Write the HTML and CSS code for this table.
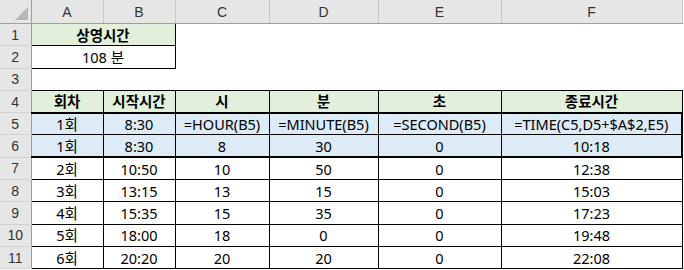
FILE: index.html
```html
<!DOCTYPE html>
<html lang="ko">
<head>
<meta charset="utf-8">
<title>상영시간</title>
<link rel="stylesheet" href="styles.css">
</head>
<body>
<table class="sheet">
  <colgroup>
    <col class="c-rh"><col class="c-a"><col class="c-b"><col class="c-c"><col class="c-d"><col class="c-e"><col class="c-f">
  </colgroup>
  <thead>
    <tr class="colhead">
      <th class="corner"><div class="corner-box"><svg width="13" height="13" viewBox="0 0 13 13"><polygon points="0,13 13,13 13,0" fill="#b7b7b7"/></svg></div></th>
      <th>A</th><th>B</th><th>C</th><th>D</th><th>E</th><th>F</th>
    </tr>
  </thead>
  <tbody>
    <tr><th class="rh">1</th><td colspan="2" class="box green bold">상영시간</td><td></td><td></td><td></td><td></td></tr>
    <tr><th class="rh">2</th><td colspan="2" class="box">108 분</td><td></td><td></td><td></td><td></td></tr>
    <tr><th class="rh">3</th><td></td><td></td><td></td><td></td><td></td><td></td></tr>
    <tr class="grid green bold"><th class="rh">4</th><td>회차</td><td>시작시간</td><td>시</td><td>분</td><td>초</td><td>종료시간</td></tr>
    <tr class="grid blue top-thick"><th class="rh">5</th><td>1회</td><td>8:30</td><td>=HOUR(B5)</td><td>=MINUTE(B5)</td><td>=SECOND(B5)</td><td class="right-thick">=TIME(C5,D5+$A$2,E5)</td></tr>
    <tr class="grid blue bottom-thick"><th class="rh">6</th><td>1회</td><td>8:30</td><td>8</td><td>30</td><td>0</td><td class="right-thick">10:18</td></tr>
    <tr class="grid"><th class="rh">7</th><td>2회</td><td>10:50</td><td>10</td><td>50</td><td>0</td><td>12:38</td></tr>
    <tr class="grid"><th class="rh">8</th><td>3회</td><td>13:15</td><td>13</td><td>15</td><td>0</td><td>15:03</td></tr>
    <tr class="grid"><th class="rh">9</th><td>4회</td><td>15:35</td><td>15</td><td>35</td><td>0</td><td>17:23</td></tr>
    <tr class="grid"><th class="rh">10</th><td>5회</td><td>18:00</td><td>18</td><td>0</td><td>0</td><td>19:48</td></tr>
    <tr class="grid"><th class="rh">11</th><td>6회</td><td>20:20</td><td>20</td><td>20</td><td>0</td><td>22:08</td></tr>
  </tbody>
</table>
</body>
</html>
```

FILE: styles.css
```css
html, body {
  margin: 0;
  padding: 0;
  background: #ffffff;
}

.sheet {
  border-collapse: collapse;
  table-layout: fixed;
  width: 682px;
  font-family: "Noto Sans", "Noto Sans CJK KR", sans-serif;
  font-size: 14.5px;
  color: #000;
}

.c-rh { width: 31px; }
.c-a { width: 72px; }
.c-b { width: 72px; }
.c-c { width: 94px; }
.c-d { width: 109px; }
.c-e { width: 123px; }
.c-f { width: 181px; }

.sheet td,
.sheet th {
  padding: 0;
  text-align: center;
  vertical-align: middle;
  line-height: 18px;
  white-space: nowrap;
  overflow: hidden;
}

.colhead th {
  height: 23px;
  background: #e6e6e6;
  color: #333;
  font-family: "Liberation Sans", Arial, sans-serif;
  font-weight: normal;
  font-size: 14px;
  border-right: 1px solid #c6c6c6;
  border-bottom: 1px solid #9e9e9e;
}

.colhead th.corner {
  border-right: 1px solid #9e9e9e;
}

.corner-box {
  display: flex;
  justify-content: flex-end;
  align-items: flex-end;
  height: 23px;
  padding: 0 3px 3px 0;
  box-sizing: border-box;
}

.corner-box svg {
  display: block;
}

tbody tr {
  height: 22.3px;
}

.rh {
  background: #e6e6e6;
  color: #333;
  font-family: "Liberation Sans", Arial, sans-serif;
  font-weight: normal;
  font-size: 14px;
  border-right: 1px solid #9e9e9e;
  border-bottom: 1px solid #d0d0d0;
}

.box {
  border: 1px solid #000;
}

.green td,
td.green {
  background: #e2efda;
}

.blue td {
  background: #ddebf7;
}

.bold td,
td.bold {
  font-weight: bold;
}

.grid td {
  border: 1px solid #000;
}

.top-thick td {
  border-top: 2px solid #000;
}

.bottom-thick td {
  border-bottom: 2px solid #000;
}

.grid td.right-thick {
  border-right: 2px solid #000;
}
```
